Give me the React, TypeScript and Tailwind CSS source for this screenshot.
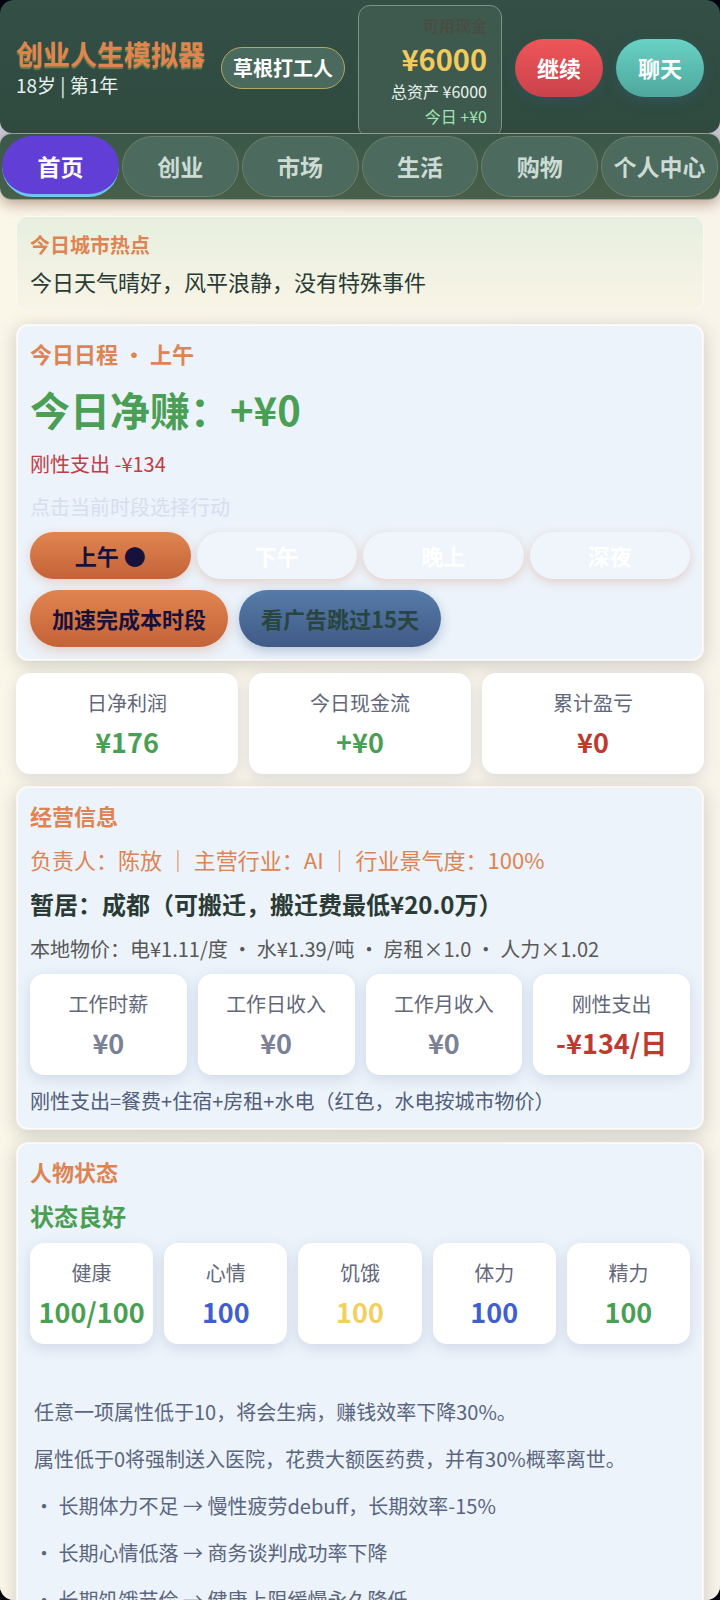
// Home tab of the business-life simulator: header, tab bar and daily panels.

import React from "react";

const TABS = ["首页", "创业", "市场", "生活", "购物", "个人中心"];

const SLOTS = ["上午", "下午", "晚上", "深夜"];

type Stat = { label: string; value: string; color: string };

const SUMMARY: Stat[] = [
	{ label: "日净利润", value: "¥176", color: "text-[#4a9f55]" },
	{ label: "今日现金流", value: "+¥0", color: "text-[#4a9f55]" },
	{ label: "累计盈亏", value: "¥0", color: "text-[#c0392f]" },
];

const INCOME: Stat[] = [
	{ label: "工作时薪", value: "¥0", color: "text-[#7b8196]" },
	{ label: "工作日收入", value: "¥0", color: "text-[#7b8196]" },
	{ label: "工作月收入", value: "¥0", color: "text-[#7b8196]" },
	{ label: "刚性支出", value: "-¥134/日", color: "text-[#c0392f]" },
];

const BODY: Stat[] = [
	{ label: "健康", value: "100/100", color: "text-[#4a9f55]" },
	{ label: "心情", value: "100", color: "text-[#3f5fd0]" },
	{ label: "饥饿", value: "100", color: "text-[#f2d060]" },
	{ label: "体力", value: "100", color: "text-[#3f5fd0]" },
	{ label: "精力", value: "100", color: "text-[#4a9f55]" },
];

const NOTES = [
	"任意一项属性低于10，将会生病，赚钱效率下降30%。",
	"属性低于0将强制送入医院，花费大额医药费，并有30%概率离世。",
	"・ 长期体力不足 → 慢性疲劳debuff，长期效率-15%",
	"・ 长期心情低落 → 商务谈判成功率下降",
	"・ 长期饥饿节俭 → 健康上限缓慢永久降低",
];

export default function App() {
	const [tab, setTab] = React.useState(TABS[0]);

	return (
		<div
			lang="zh-CN"
			className="h-screen bg-[#04050f] font-['Noto_Sans_CJK_SC',sans-serif] text-[#2a3a35]"
		>
			<div className="flex h-full flex-col overflow-hidden rounded-[14px] bg-linear-to-b from-[#04050f] from-2% to-[#c9c8d4] to-4%">
				<Header />
				<TabBar active={tab} onSelect={setTab} />
				<main className="-mt-4 min-h-0 flex-1 overflow-y-auto bg-linear-to-r from-[#faf6e8] to-[#f9f4ea] px-4 pt-8 [scrollbar-width:none]">
					<section className="mb-[13px] rounded-xl border border-white/60 bg-linear-to-b from-[#e7efdf] to-[#f8f4e6] px-[13px] pt-[13px] pb-[11px]">
						<h2 className="text-[20px] leading-[30px] font-bold text-[#de8452]">今日城市热点</h2>
						<p className="mt-[3px] text-[22px] leading-[36px]">今日天气晴好，风平浪静，没有特殊事件</p>
					</section>
					<Schedule />
					<div className="mb-3 grid grid-cols-3 gap-[11px]">
						<StatCards items={SUMMARY} />
					</div>
					<Business />
					<Condition />
				</main>
			</div>
		</div>
	);
}

function Header() {
	return (
		<header className="flex h-[133px] shrink-0 items-center gap-[13px] overflow-hidden rounded-xl bg-linear-to-b from-[#334f46] to-[#2f4b40] px-4 pt-[2px] text-white">
			<div className="min-w-0 flex-1 whitespace-nowrap">
				<h1 className="text-[27px] leading-[34px] font-bold text-[#e0854f] [text-shadow:0_2px_1px_#6f7f4c]">
					创业人生模拟器
				</h1>
				<p className="text-[19px] leading-[28px] text-[#eaf2ee]">18岁 | 第1年</p>
			</div>
			<span className="flex h-[42px] items-center rounded-full border border-[#b5a860] bg-[#4a6a5d] px-[11px] text-[20px] font-bold">
				草根打工人
			</span>
			<div className="mt-[3px] h-[133px] w-[144px] self-start rounded-xl border border-[#7d9489] bg-[#3e5a4f] px-[14px] pt-[6px] text-right whitespace-nowrap">
				<div className="text-[16px] leading-[26px] font-medium text-[#4a4c41]">可用现金</div>
				<div className="text-[29px] leading-[40px] font-bold text-[#f2cb5c]">¥6000</div>
				<div className="text-[16px] leading-[26px] text-[#eaf2ee]">总资产 ¥6000</div>
				<div className="text-[16px] leading-[24px] text-[#a2e6b4]">今日 +¥0</div>
			</div>
			<button
				type="button"
				className="h-[58px] w-[88px] rounded-full bg-linear-to-b from-[#ee5659] to-[#cb424b] text-[22px] font-bold shadow-[0_4px_12px_rgba(48,90,110,0.4)]"
			>
				继续
			</button>
			<button
				type="button"
				className="h-[58px] w-[88px] rounded-full bg-linear-to-b from-[#68d2c4] to-[#4fa79d] text-[22px] font-bold shadow-[0_4px_12px_rgba(48,90,110,0.5)]"
			>
				聊天
			</button>
		</header>
	);
}

function TabBar({ active, onSelect }: { active: string; onSelect: (t: string) => void }) {
	return (
		<nav className="relative z-10 grid shrink-0 grid-cols-6 gap-[3px] rounded-xl border-y border-[#8ba096] bg-linear-to-b from-[#3a5749] to-[#48604a] px-[2px] py-[2px] shadow-[0_4px_14px_rgba(110,60,40,0.45)]">
			{TABS.map((t) => (
				<button
					key={t}
					type="button"
					onClick={() => onSelect(t)}
					className={
						t === active
							? "h-[61px] rounded-full border-b-[3px] border-[#6fc4f2] bg-[#613fd6] pt-[3px] text-[23px] font-bold whitespace-nowrap text-white"
							: "h-[61px] rounded-full border border-[#6f8069] bg-[#4c6a5d] text-[23px] font-bold whitespace-nowrap text-[#cddbd5]"
					}
				>
					{t}
				</button>
			))}
		</nav>
	);
}

function Panel({ title, children }: { title: string; children: React.ReactNode }) {
	return (
		<section className="mb-3 rounded-xl border-2 border-white/70 bg-[#ecf3fa] bg-clip-padding px-3 pt-[11px] pb-3 shadow-[0_4px_18px_rgba(60,70,80,0.24)]">
			<h2 className="text-[22px] leading-[32px] font-bold text-[#de8452]">{title}</h2>
			{children}
		</section>
	);
}

function StatCards({ items }: { items: Stat[] }) {
	return (
		<>
			{items.map(({ label, value, color }) => (
				<div
					key={label}
					className="rounded-[14px] bg-white pt-[15px] pb-3 text-center whitespace-nowrap shadow-[0_4px_14px_rgba(70,90,150,0.17)]"
				>
					<div className="text-[20px] leading-[30px] text-[#62677c]">{label}</div>
					<div className={`mt-1 text-[27px] leading-[40px] font-bold ${color}`}>{value}</div>
				</div>
			))}
		</>
	);
}

function Schedule() {
	const [slot, setSlot] = React.useState(SLOTS[0]);

	return (
		<Panel title="今日日程 ・ 上午">
			<div className="mt-[10px] text-[40px] leading-[60px] font-bold text-[#4a9f55]">今日净赚：+¥0</div>
			<p className="mt-[10px] text-[20px] leading-[30px] text-[#c23c42]">刚性支出 -¥134</p>
			<p className="mt-[13px] text-[20px] leading-[30px] text-[#d6ddef]">点击当前时段选择行动</p>
			<div className="mt-[10px] grid grid-cols-4 gap-[6px]">
				{SLOTS.map((s) => (
					<button
						key={s}
						type="button"
						onClick={() => setSlot(s)}
						className={
							s === slot
								? "h-[47px] rounded-full bg-linear-to-b from-[#e08550] to-[#c46238] text-[22px] font-bold text-[#17113c] shadow-[0_3px_10px_rgba(200,100,60,0.25)]"
								: "h-[47px] rounded-full bg-[#f0f5fc] text-[22px] font-bold text-white shadow-[0_3px_10px_rgba(200,100,60,0.25)]"
						}
					>
						{s === slot ? `${s} ●` : s}
					</button>
				))}
			</div>
			<div className="mt-[11px] flex gap-[11px]">
				<button
					type="button"
					className="h-[57px] rounded-full bg-linear-to-b from-[#e08550] to-[#c46238] px-[22px] text-[22px] font-bold text-[#17113c] shadow-[0_4px_12px_rgba(200,100,60,0.25)]"
				>
					加速完成本时段
				</button>
				<button
					type="button"
					className="h-[57px] rounded-full bg-linear-to-b from-[#567ca9] to-[#405a86] px-[22px] text-[22px] font-bold text-[#28453f] shadow-[0_4px_12px_rgba(60,90,150,0.3)]"
				>
					看广告跳过15天
				</button>
			</div>
		</Panel>
	);
}

function Business() {
	return (
		<Panel title="经营信息">
			<p className="mt-[11px] text-[22px] leading-[34px] text-[#de8452]">
				负责人：陈放 ｜ 主营行业：AI ｜ 行业景气度：100%
			</p>
			<p className="mt-[10px] text-[24px] leading-[36px] font-bold">
				暂居：成都（可搬迁，搬迁费最低¥20.0万）
			</p>
			<p className="mt-3 text-[20px] leading-[30px] text-[#585858]">
				本地物价：电¥1.11/度 ・ 水¥1.39/吨 ・ 房租×1.0 ・ 人力×1.02
			</p>
			<div className="mt-[10px] grid grid-cols-4 gap-[11px]">
				<StatCards items={INCOME} />
			</div>
			<p className="mt-[11px] text-[20px] leading-[30px] text-[#515d7a]">
				刚性支出=餐费+住宿+房租+水电（红色，水电按城市物价）
			</p>
		</Panel>
	);
}

function Condition() {
	return (
		<Panel title="人物状态">
			<p className="mt-[11px] text-[24px] leading-[36px] font-bold text-[#4a9f55]">状态良好</p>
			<div className="mt-[9px] grid grid-cols-5 gap-[11px]">
				<StatCards items={BODY} />
			</div>
			<div className="mt-[44px] px-1 text-[20px] leading-[47px] text-[#5a6580]">
				{NOTES.map((n) => (
					<p key={n}>{n}</p>
				))}
			</div>
		</Panel>
	);
}
